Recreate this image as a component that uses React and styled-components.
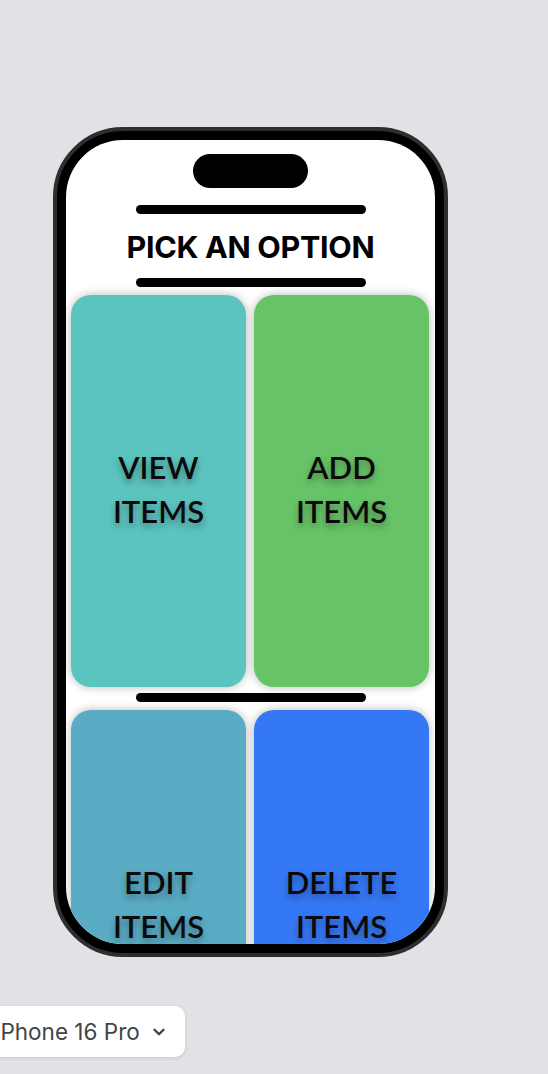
import React from "react";
import styled, { createGlobalStyle } from "styled-components";
import { ChevronDown } from "lucide-react";

const GlobalStyle = createGlobalStyle`
  html, body {
    margin: 0;
    padding: 0;
    background: #e1e2e6;
    overflow: hidden;
  }
  body {
    font-family: Inter, "Liberation Sans", sans-serif;
  }
`;

const options = [
  [
    { label: ["VIEW", "ITEMS"], color: "#5cc4be" },
    { label: ["ADD", "ITEMS"], color: "#66c467" },
  ],
  [
    { label: ["EDIT", "ITEMS"], color: "#5aabc4" },
    { label: ["DELETE", "ITEMS"], color: "#3578f6" },
  ],
];

const Page = styled.div`
  width: 548px;
  height: 1074px;
  display: flex;
  flex-direction: column;
  align-items: flex-start;
  padding-top: 127px;
  box-sizing: border-box;
`;

const PhoneFrame = styled.div`
  margin-left: 53px;
  width: 395px;
  height: 830px;
  box-sizing: border-box;
  border-radius: 70px;
  border: 4px solid #2e2e2e;
  background: #000;
  padding: 9px;
`;

const Screen = styled.div`
  height: 804px;
  border-radius: 57px;
  background: #fff;
  overflow: hidden;
  display: flex;
  flex-direction: column;
  align-items: center;
  padding-top: 14px;
  box-sizing: border-box;
`;

const Island = styled.div`
  flex-shrink: 0;
  width: 115px;
  height: 34px;
  border-radius: 17px;
  background: #000;
`;

const Divider = styled.div`
  flex-shrink: 0;
  width: 230px;
  height: 9px;
  border-radius: 5px;
  background: #000;
  margin-top: ${(p) => p.$top || 0}px;
  margin-bottom: ${(p) => p.$bottom || 0}px;
`;

const Title = styled.h1`
  flex-shrink: 0;
  margin: 0;
  height: 64px;
  display: flex;
  align-items: center;
  justify-content: center;
  font-size: 30.5px;
  font-weight: 700;
  letter-spacing: -0.3px;
  color: #000;
`;

const CardRow = styled.div`
  flex-shrink: 0;
  width: 100%;
  box-sizing: border-box;
  padding: 0 6px 0 5px;
  display: grid;
  grid-template-columns: 1fr 1fr;
  gap: 8px;
`;

const Card = styled.button`
  height: 392px;
  border: none;
  border-radius: 20px;
  background: ${(p) => p.$color};
  box-shadow: 0 0 10px rgba(0, 0, 0, 0.28);
  display: flex;
  flex-direction: column;
  align-items: center;
  justify-content: center;
  padding: 0 0 4px;
  font-family: Lato, "Open Sans", sans-serif;
  font-size: 31px;
  font-weight: 600;
  line-height: 44px;
  color: #0a0a0a;
  text-shadow: 0 4px 7px rgba(0, 0, 0, 0.35);
  cursor: pointer;
`;

const DevicePicker = styled.div`
  margin-top: 49px;
  margin-left: -19px;
  height: 51px;
  display: flex;
  align-items: center;
  gap: 10px;
  padding: 0 17px 0 14px;
  background: #fff;
  border-radius: 10px;
  box-shadow: 0 1px 4px rgba(0, 0, 0, 0.12);
  font-family: Inter, "Liberation Sans", sans-serif;
  font-size: 22.5px;
  color: #444;
`;

export default function App() {
  return (
    <Page>
      <GlobalStyle />
      <PhoneFrame>
        <Screen>
          <Island />
          <Divider $top={17} />
          <Title>PICK AN OPTION</Title>
          <Divider $bottom={8} />
          <CardRow>
            {options[0].map((o) => (
              <Card key={o.label.join()} $color={o.color}>
                {o.label.map((w) => <span key={w}>{w}</span>)}
              </Card>
            ))}
          </CardRow>
          <Divider $top={6} $bottom={8} />
          <CardRow>
            {options[1].map((o) => (
              <Card key={o.label.join()} $color={o.color}>
                {o.label.map((w) => <span key={w}>{w}</span>)}
              </Card>
            ))}
          </CardRow>
        </Screen>
      </PhoneFrame>
      <DevicePicker>
        iPhone 16 Pro
        <ChevronDown size={18} strokeWidth={3.2} color="#444" />
      </DevicePicker>
    </Page>
  );
}
